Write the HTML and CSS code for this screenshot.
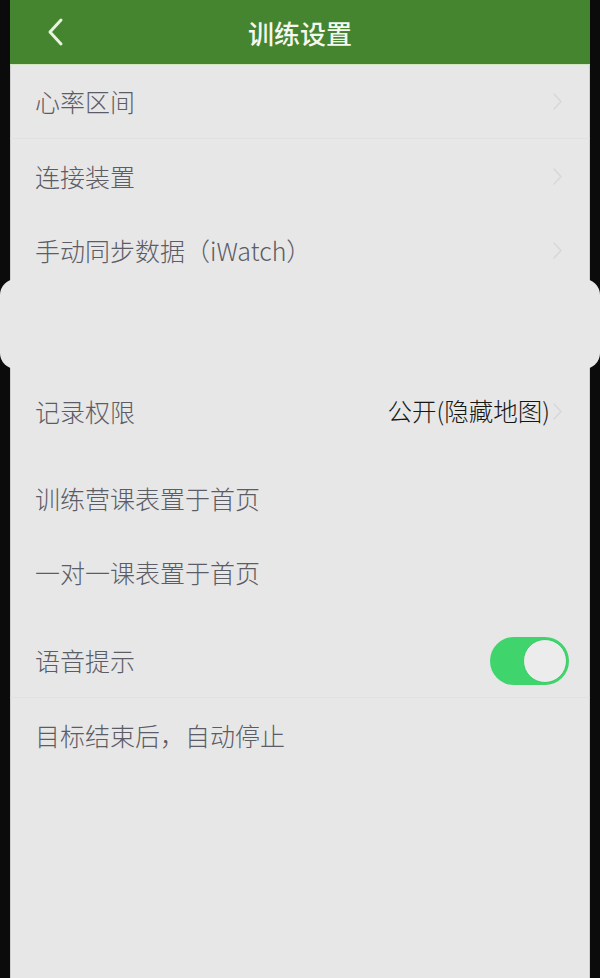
FILE: index.html
```html
<!DOCTYPE html>
<html lang="zh-CN">
<head>
<meta charset="utf-8">
<title>训练设置</title>
<link rel="stylesheet" href="styles.css">
</head>
<body>
<div class="phone">
  <header class="topbar">
    <span class="back">
      <svg width="18" height="30" viewBox="0 0 18 30"><path d="M14 3 L3 15 L14 27" fill="none" stroke="#e6f3dd" stroke-width="3" stroke-linecap="round" stroke-linejoin="round"/></svg>
    </span>
    <h1 class="title">训练设置</h1>
  </header>
  <div class="list">
    <div class="row sep"><span class="label">心率区间</span><svg class="chev" width="11" height="19" viewBox="0 0 11 19"><path d="M2 2 L9 9.5 L2 17" fill="none" stroke="#d8d8d8" stroke-width="1.6" stroke-linecap="round" stroke-linejoin="round"/></svg></div>
    <div class="row"><span class="label">连接装置</span><svg class="chev" width="11" height="19" viewBox="0 0 11 19"><path d="M2 2 L9 9.5 L2 17" fill="none" stroke="#d8d8d8" stroke-width="1.6" stroke-linecap="round" stroke-linejoin="round"/></svg></div>
    <div class="row"><span class="label">手动同步数据（iWatch）</span><svg class="chev" width="11" height="19" viewBox="0 0 11 19"><path d="M2 2 L9 9.5 L2 17" fill="none" stroke="#d8d8d8" stroke-width="1.6" stroke-linecap="round" stroke-linejoin="round"/></svg></div>
    <div class="gap"><div class="bulge"></div></div>
    <div class="row"><span class="label">记录权限</span><span class="right"><span class="value">公开(隐藏地图)</span><svg class="chev" width="11" height="19" viewBox="0 0 11 19"><path d="M2 2 L9 9.5 L2 17" fill="none" stroke="#d8d8d8" stroke-width="1.6" stroke-linecap="round" stroke-linejoin="round"/></svg></span></div>
    <div class="spacer-s"></div>
    <div class="row"><span class="label">训练营课表置于首页</span></div>
    <div class="row"><span class="label">一对一课表置于首页</span></div>
    <div class="spacer-m"></div>
    <div class="row sep"><span class="label">语音提示</span><span class="toggle"><span class="knob"></span></span></div>
    <div class="row"><span class="label">目标结束后，自动停止</span></div>
  </div>
</div>
</body>
</html>
```
FILE: styles.css
```css
html, body {
  margin: 0;
  padding: 0;
  background: #0b0b0b;
}
body {
  font-family: "Noto Sans CJK SC", "Noto Sans", sans-serif;
}
.phone {
  width: 580px;
  height: 978px;
  margin: 0 10px;
  background: #e7e7e7;
  box-shadow: inset 1px 0 0 #cfcfcf, inset -1px 0 0 #cfcfcf;
  display: flex;
  flex-direction: column;
}
.topbar {
  height: 64px;
  background: #46852f;
  border-bottom: 1px solid #cfe6c2;
  display: flex;
  align-items: center;
  justify-content: center;
  position: relative;
}
.back {
  position: absolute;
  left: 37px;
  top: 17px;
  display: flex;
}
.title {
  margin: 0;
  font-size: 26px;
  font-weight: 500;
  color: #f4f8f0;
}
.list {
  display: flex;
  flex-direction: column;
}
.row {
  height: 74px;
  display: flex;
  align-items: center;
  justify-content: space-between;
  padding: 0 27px 0 25px;
  box-sizing: border-box;
}
.row.sep {
  border-bottom: 1px solid #e1e1e1;
}
.label {
  font-size: 25px;
  font-weight: 300;
  color: #5c5c66;
  line-height: 1;
}
.right {
  display: flex;
  align-items: center;
}
.value {
  font-size: 24.5px;
  font-weight: 300;
  color: #161616;
  line-height: 1;
}
.chev {
  display: block;
  margin-left: 2px;
}
.gap {
  height: 87px;
}
.bulge {
  height: 90px;
  margin: -8px -10px 0;
  background: #e7e7e7;
  border-radius: 16px;
}
.spacer-s {
  height: 13px;
}
.spacer-m {
  height: 15px;
}
.toggle {
  width: 79px;
  height: 48px;
  border-radius: 24px;
  background: #3fd46c;
  display: flex;
  align-items: center;
  justify-content: flex-end;
  padding: 2px;
  box-sizing: border-box;
  margin-right: -6px;
}
.knob {
  width: 44px;
  height: 44px;
  border-radius: 50%;
  background: #ececec;
  box-sizing: border-box;
  border: 1px solid #3ccc66;
}
```
